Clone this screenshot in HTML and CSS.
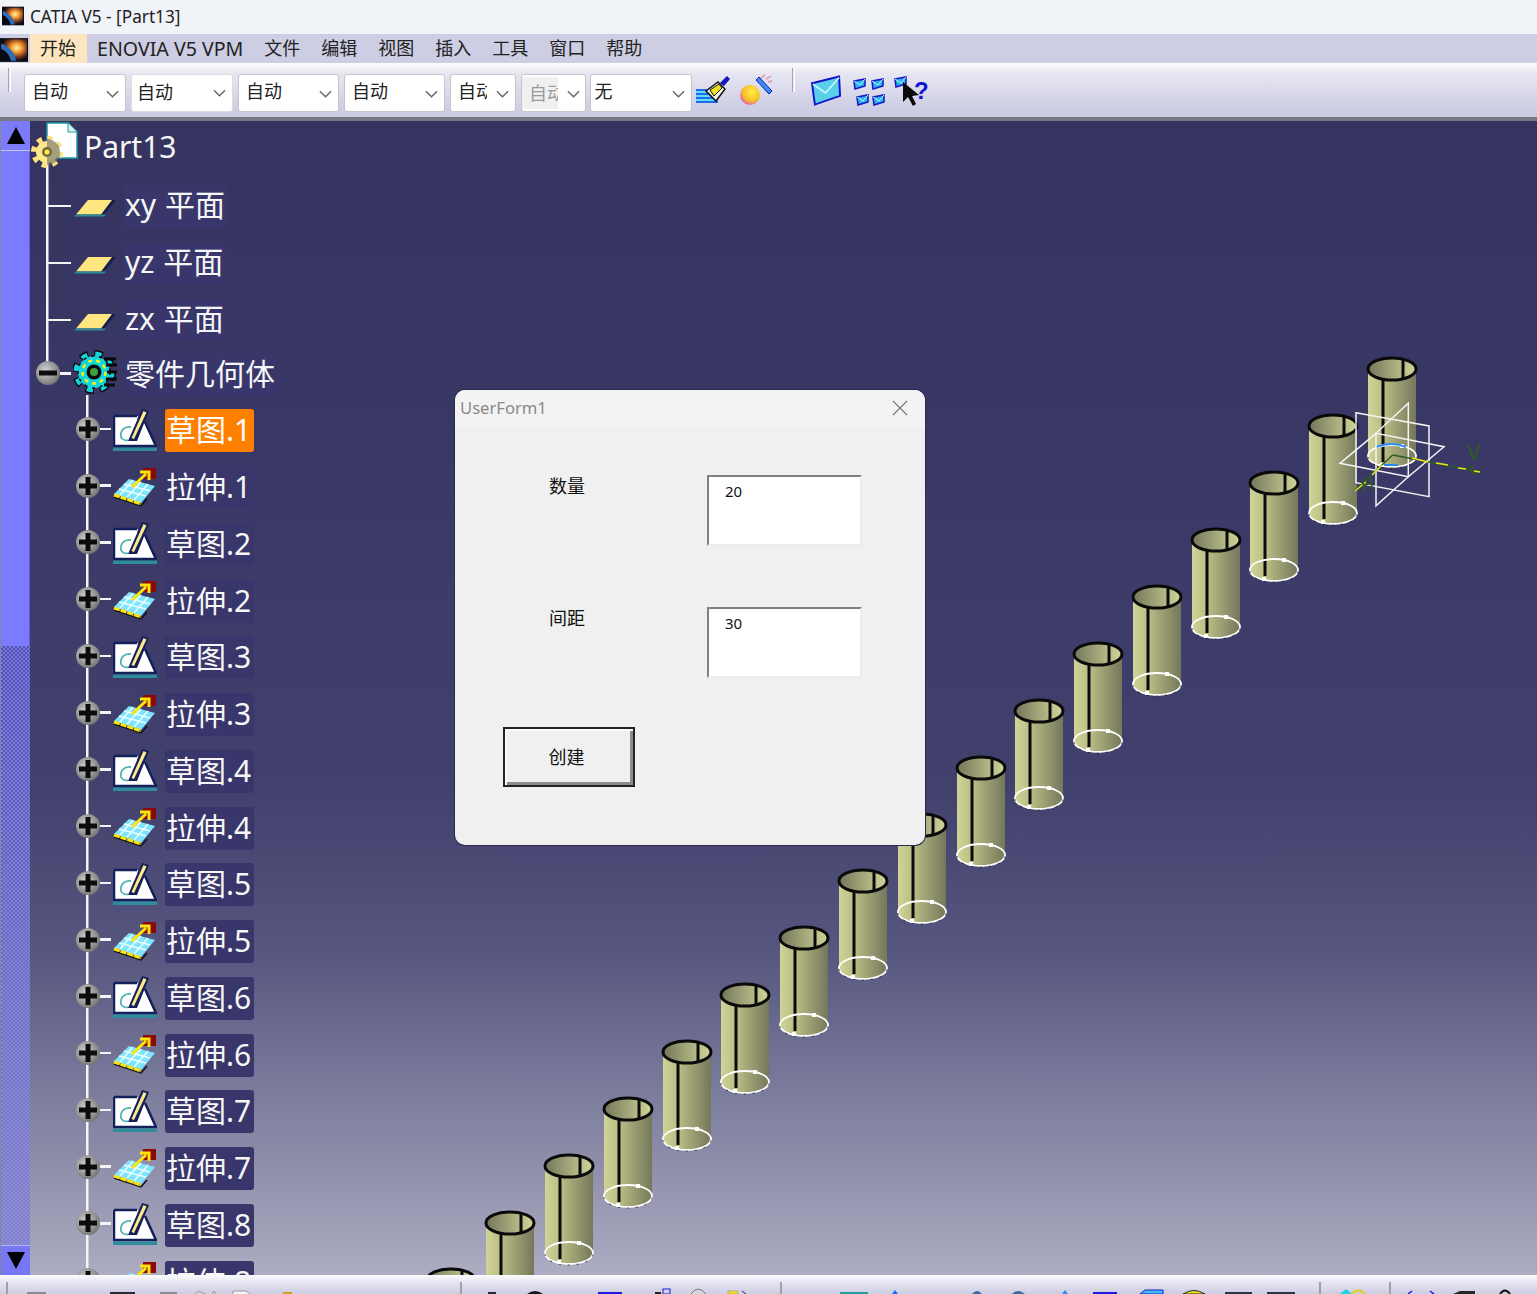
FILE: index.html
```html
<!DOCTYPE html>
<html lang="zh-CN">
<head>
    <meta charset="UTF-8">
    <title>CATIA V5 - [Part13]</title>
    <link rel="stylesheet" href="styles.css">
</head>
<body>

<!-- shared icons -->
<svg class="defs" width="0" height="0">
    <defs>
        <radialGradient id="burst" cx="0.6" cy="0.4" r="0.6">
            <stop offset="0" stop-color="#fff2b0"/>
            <stop offset="0.35" stop-color="#f59a2c"/>
            <stop offset="0.7" stop-color="#7a3a20"/>
            <stop offset="1" stop-color="#0a0a12"/>
        </radialGradient>
        <linearGradient id="cylSide">
            <stop offset="0" stop-color="#d0d496"/>
            <stop offset="0.35" stop-color="#b7bb84"/>
            <stop offset="1" stop-color="#74775a"/>
        </linearGradient>
        <linearGradient id="cylTop">
            <stop offset="0" stop-color="#74775a"/>
            <stop offset="1" stop-color="#d2d69a"/>
        </linearGradient>
        <radialGradient id="knob" cx="0.4" cy="0.4" r="0.7">
            <stop offset="0" stop-color="#d4d4d4"/>
            <stop offset="1" stop-color="#6a6a6a"/>
        </radialGradient>
        <radialGradient id="ball" cx="0.6" cy="0.35" r="0.75">
            <stop offset="0" stop-color="#ffee50"/>
            <stop offset="0.6" stop-color="#f8c020"/>
            <stop offset="0.85" stop-color="#e070a0"/>
            <stop offset="1" stop-color="#c030e0"/>
        </radialGradient>

        <symbol id="logo" viewBox="0 0 26 22">
            <rect width="26" height="22" fill="#0a0a12"/>
            <rect x="1" y="1" width="24" height="20" fill="url(#burst)"/>
            <path d="M1 5C9 8 14 14 15 21H10C9 16 6 12 1 10Z" fill="#2a6cc0"/>
            <path d="M1 10C6 12 9 16 10 21H1Z" fill="#0a0a12"/>
        </symbol>

        <symbol id="plane" viewBox="0 0 44 20">
            <path d="M2 18H30L43 2H16Z" fill="#14204a"/>
            <path d="M3 16.5L15 2H39L28 16.5Z" fill="#ffe680"/>
            <path d="M1 18.5H31L33 16.5H3Z" fill="#2e8c9c"/>
        </symbol>

        <symbol id="expand" viewBox="0 0 24 24">
            <circle cx="12" cy="12" r="12" fill="url(#knob)"/>
            <path d="M3 9.500H9.500V3H14.500V9.500H21V14.500H14.500V21H9.500V14.500H3Z" fill="#0c0c0c"/>
        </symbol>

        <symbol id="sketch" viewBox="0 0 44 44">
            <path d="M1 8H25L23 19L31 14L42 38H1Z" fill="#fff"/>
            <path d="M1 8H24M1 8V38H43L32 14" fill="none" stroke="#14205a" stroke-width="2.500"/>
            <path d="M0 39.500H44V43H0Z" fill="#2e8c9c"/>
            <path d="M18 19C11 18 7 23 8 29C9 32 13 33 15 32" fill="none" stroke="#4fb4b0" stroke-width="1.800"/>
            <path d="M29 1L36 3L24 33H15Z" fill="#14205a"/>
            <path d="M30.500 3L33.500 4.500L21 31L18.500 30Z" fill="#ffe98a"/>
        </symbol>

        <symbol id="pad" viewBox="0 0 44 40">
            <path d="M1 27L16 12L42 19L28 36Z" fill="#7fe4ff"/>
            <path d="M6 22L33 29M11 17L37 24M20 13L7 28M28 15L14 30M35 17L21 33" stroke="#eaffff" stroke-width="1.500"/>
            <path d="M1 28L28 37L34 30" fill="none" stroke="#111" stroke-width="1.500" transform="translate(0 2)"/>
            <path d="M1 28L28 37" fill="none" stroke="#ffe40a" stroke-width="3" stroke-dasharray="6 1"/>
            <rect x="30" y="1" width="13" height="11" fill="#8a0a0a"/>
            <path d="M19 20L33 7M27 5H36V13" fill="none" stroke="#ffe40a" stroke-width="3"/>
        </symbol>

        <symbol id="env" viewBox="0 0 14 12">
            <path d="M1 3L12 1V8L2 11Z" fill="#2ab4ea" stroke="#1414c8" stroke-width="1.500"/>
            <path d="M1 3L7 7L12 1" fill="none" stroke="#bfefff"/>
        </symbol>

        <g id="cyl">
            <path d="M-24 0V87A24 11 0 0 0 24 87V0Z" fill="url(#cylSide)"/>
            <ellipse cy="0" rx="24" ry="11" fill="url(#cylTop)" stroke="#0a0a0a" stroke-width="3"/>
            <path d="M11 -10V10" stroke="#0a0a0a" stroke-width="3"/>
            <path d="M-9 10V93" stroke="#0a0a0a" stroke-width="3"/>
            <ellipse cy="87" rx="24" ry="11" fill="none" stroke="#fff" stroke-width="1.800"/>
            <path d="M-24 88A24 11 0 0 0 24 88" fill="none" stroke="#111" stroke-width="1" stroke-dasharray="2 7" opacity="0.800"/>
            <rect x="8" y="75" width="4" height="4" fill="#fff"/>
            <rect x="-12" y="94" width="4" height="4" fill="#fff"/>
        </g>
    </defs>
</svg>

<div class="app">
    <div class="titlebar">
        <svg class="title-logo"><use href="#logo"/></svg>
        <span>CATIA V5 - [Part13]</span>
    </div>

    <div class="menubar">
        <svg class="menu-logo"><use href="#logo"/></svg>
        <span class="menu-item active">开始</span>
        <span class="menu-item menu-latin">ENOVIA V5 VPM</span>
        <span class="menu-item">文件</span>
        <span class="menu-item">编辑</span>
        <span class="menu-item">视图</span>
        <span class="menu-item">插入</span>
        <span class="menu-item">工具</span>
        <span class="menu-item">窗口</span>
        <span class="menu-item">帮助</span>
    </div>

    <div class="toolbar">
        <div class="grip"></div>
        <div class="combo w102"><span class="combo-text">自动</span><svg class="chev" viewBox="0 0 14 8"><path d="M1 1L7 7L13 1"/></svg></div>
        <div class="combo w102 combo-b"><span class="combo-text">自动</span><svg class="chev" viewBox="0 0 14 8"><path d="M1 1L7 7L13 1"/></svg></div>
        <div class="combo w101"><span class="combo-text">自动</span><svg class="chev" viewBox="0 0 14 8"><path d="M1 1L7 7L13 1"/></svg></div>
        <div class="combo w101"><span class="combo-text">自动</span><svg class="chev" viewBox="0 0 14 8"><path d="M1 1L7 7L13 1"/></svg></div>
        <div class="combo w66"><span class="combo-text">自动</span><svg class="chev" viewBox="0 0 14 8"><path d="M1 1L7 7L13 1"/></svg></div>
        <div class="combo w65 disabled"><span class="combo-text">自动</span><svg class="chev" viewBox="0 0 14 8"><path d="M1 1L7 7L13 1"/></svg></div>
        <div class="combo w102 combo-none"><span class="combo-text">无</span><svg class="chev" viewBox="0 0 14 8"><path d="M1 1L7 7L13 1"/></svg></div>

        <svg class="tool brush" viewBox="0 0 36 34">
            <path d="M2 16H18M2 20H20M2 24H22M2 28H24" stroke="#1a6cf0" stroke-width="2"/>
            <path d="M2 18H18M2 22H20M2 26H22" stroke="#3ce0f0" stroke-width="1.500"/>
            <path d="M12 17L24 8L31 15L22 27Z" fill="#f4f4e4" stroke="#111" stroke-width="1.500"/>
            <path d="M16 16L25 10L28 14L20 22Z" fill="#f0e020" stroke="#111"/>
            <path d="M26 9L33 2L36 5L30 12Z" fill="#1414b8"/>
        </svg>
        <svg class="tool ball" viewBox="0 0 34 34">
            <circle cx="10" cy="21" r="10" fill="url(#ball)"/>
            <path d="M16 6L29 20L32 17L19 3Z" fill="#3c8cf0" stroke="#1414b8"/>
            <path d="M21 4L25 1M26 5L31 2M28 8L32 7" stroke="#e0a0c0" stroke-width="2"/>
        </svg>
        <div class="grip grip-b"></div>
        <svg class="tool envelope" viewBox="0 0 32 34">
            <path d="M1 9L29 2L30 22L4 31Z" fill="#58d0ea" stroke="#1414c8" stroke-width="2"/>
            <path d="M2 10L15 19L29 3" fill="none" stroke="#d8f6ff" stroke-width="1.500"/>
        </svg>
        <svg class="tool many" viewBox="0 0 34 34">
            <use href="#env" x="1" y="4" width="14" height="12"/>
            <use href="#env" x="19" y="4" width="14" height="12"/>
            <use href="#env" x="4" y="20" width="14" height="12"/>
            <use href="#env" x="20" y="20" width="14" height="12"/>
        </svg>
        <svg class="tool cursor" viewBox="0 0 35 34">
            <use href="#env" x="0" y="2" width="14" height="12"/>
            <path d="M9 8V28L14 23L19 32L22 30L18 22L25 21Z" fill="#0a0a0a"/>
            <text class="help-mark" x="20" y="25">?</text>
        </svg>
    </div>

    <div class="viewport">
        <!-- 3d scene, coordinates are the screen ones -->
        <svg class="scene" viewBox="0 121 1537 1154">
            <use href="#cyl" x="1392" y="369"/>
            <use href="#cyl" x="1333" y="426"/>
            <use href="#cyl" x="1274" y="483"/>
            <use href="#cyl" x="1216" y="540"/>
            <use href="#cyl" x="1157" y="597"/>
            <use href="#cyl" x="1098" y="654"/>
            <use href="#cyl" x="1039" y="711"/>
            <use href="#cyl" x="981" y="768"/>
            <use href="#cyl" x="922" y="825"/>
            <use href="#cyl" x="863" y="881"/>
            <use href="#cyl" x="804" y="938"/>
            <use href="#cyl" x="745" y="995"/>
            <use href="#cyl" x="687" y="1052"/>
            <use href="#cyl" x="628" y="1109"/>
            <use href="#cyl" x="569" y="1166"/>
            <use href="#cyl" x="510" y="1223"/>
            <use href="#cyl" x="451" y="1280"/>

            <path d="M1376 447Q1392 441 1406 447M1384 465H1398" fill="none" stroke="#2a8cf0" stroke-width="2"/>
            <g fill="none" stroke="#f4f4f4" stroke-width="1.500">
                <path d="M1356 412.700L1429 426V496.700L1356 482.700Z"/>
                <path d="M1408.300 403.300V476.700L1376 505.700V433.300Z"/>
                <path d="M1340 463.300L1376 433.300L1444 446.700L1408.300 476.700Z"/>
            </g>
            <g fill="none" stroke="#2f5c1c" stroke-width="1.500">
                <path d="M1392.700 455L1480 471.700"/>
                <path d="M1392.700 455L1382 465L1355 490.700"/>
                <path d="M1466 470L1472 466V474L1480 472"/>
            </g>
            <g fill="none" stroke="#e6e620" stroke-width="1.500">
                <path d="M1412 458L1428 462M1436 463L1448 465M1458 468L1466 469M1474 471L1480 472"/>
                <path d="M1382 465L1372 475M1366 482L1355 491"/>
            </g>
            <text class="axis" x="1467" y="460">V</text>
            <text class="axis axis-h" x="1362" y="492" transform="rotate(-10 1362 492)">H</text>
        </svg>

        <div class="scrollbar">
            <div class="scroll-btn"><span class="tri-up"></span></div>
            <div class="scroll-thumb"></div>
            <div class="scroll-track"></div>
            <div class="scroll-btn scroll-btn-down"><span class="tri-down"></span></div>
        </div>

        <div class="tree">
            <div class="tree-root">
                <div class="row row-part">
                    <svg class="part-icon" viewBox="0 0 50 50">
                        <path d="M17 1H38L47 10V36H17Z" fill="#fff" stroke="#1c9aa8" stroke-width="1.500"/>
                        <path d="M38 1V10H47" fill="#d8f4f4" stroke="#1c9aa8"/>
                        <circle cx="17" cy="30" r="13" fill="none" stroke="#ffe27a" stroke-width="6" stroke-dasharray="5 5.200"/>
                        <circle cx="17" cy="30" r="11" fill="#ffe88a"/>
                        <path d="M17 17A13 13 0 0 1 17 43Z" fill="#77766e" opacity="0.650"/>
                        <circle cx="17" cy="30" r="5" fill="#6e6a40"/>
                        <circle cx="17" cy="30" r="2.500" fill="#fff04a"/>
                    </svg>
                    <span class="label label-part">Part13</span>
                </div>
                <div class="row row-plane">
                    <span class="branch branch-long"></span>
                    <svg class="plane-icon"><use href="#plane"/></svg>
                    <span class="label label-top">xy 平面</span>
                </div>
                <div class="row row-plane">
                    <span class="branch branch-long"></span>
                    <svg class="plane-icon"><use href="#plane"/></svg>
                    <span class="label label-top">yz 平面</span>
                </div>
                <div class="row row-plane">
                    <span class="branch branch-long"></span>
                    <svg class="plane-icon"><use href="#plane"/></svg>
                    <span class="label label-top">zx 平面</span>
                </div>
                <div class="row row-body">
                    <svg class="knob" viewBox="0 0 24 24">
                        <circle cx="12" cy="12" r="12" fill="url(#knob)"/>
                        <path d="M3 9.500H21V14.500H3Z" fill="#0c0c0c"/>
                    </svg>
                    <span class="branch"></span>
                    <svg class="body-icon" viewBox="0 0 44 44">
                        <circle cx="21" cy="22" r="18" fill="none" stroke="#0a0a0a" stroke-width="8" stroke-dasharray="8 6.100"/>
                        <circle cx="21" cy="22" r="18" fill="none" stroke="#14d4dc" stroke-width="5" stroke-dasharray="6 8.100" stroke-dashoffset="-1"/>
                        <circle cx="21" cy="22" r="16" fill="#14d4dc"/>
                        <circle cx="21" cy="22" r="16" fill="none" stroke="#0a0a0a" stroke-width="1.500" stroke-dasharray="3 5"/>
                        <circle cx="21" cy="22" r="11.500" fill="none" stroke="#f4f01a" stroke-width="2.500" stroke-dasharray="4 4"/>
                        <path d="M31 9H43M33 15H44M34 22H44M33 29H44M31 35H42" stroke="#0a0a0a" stroke-width="3"/>
                        <circle cx="21" cy="22" r="7.500" fill="#0a0a0a"/>
                        <circle cx="21" cy="22" r="4" fill="#3ea03a"/>
                    </svg>
                    <span class="label label-top">零件几何体</span>
                </div>
            </div>

            <div class="tree-children">
                <div class="row row-child">
                    <svg class="knob"><use href="#expand"/></svg><span class="branch"></span>
                    <svg class="feat-icon"><use href="#sketch"/></svg>
                    <span class="label label-sel">草图.1</span>
                </div>
                <div class="row row-child">
                    <svg class="knob"><use href="#expand"/></svg><span class="branch"></span>
                    <svg class="feat-icon"><use href="#pad"/></svg>
                    <span class="label">拉伸.1</span>
                </div>
                <div class="row row-child">
                    <svg class="knob"><use href="#expand"/></svg><span class="branch"></span>
                    <svg class="feat-icon"><use href="#sketch"/></svg>
                    <span class="label">草图.2</span>
                </div>
                <div class="row row-child">
                    <svg class="knob"><use href="#expand"/></svg><span class="branch"></span>
                    <svg class="feat-icon"><use href="#pad"/></svg>
                    <span class="label">拉伸.2</span>
                </div>
                <div class="row row-child">
                    <svg class="knob"><use href="#expand"/></svg><span class="branch"></span>
                    <svg class="feat-icon"><use href="#sketch"/></svg>
                    <span class="label">草图.3</span>
                </div>
                <div class="row row-child">
                    <svg class="knob"><use href="#expand"/></svg><span class="branch"></span>
                    <svg class="feat-icon"><use href="#pad"/></svg>
                    <span class="label">拉伸.3</span>
                </div>
                <div class="row row-child">
                    <svg class="knob"><use href="#expand"/></svg><span class="branch"></span>
                    <svg class="feat-icon"><use href="#sketch"/></svg>
                    <span class="label">草图.4</span>
                </div>
                <div class="row row-child">
                    <svg class="knob"><use href="#expand"/></svg><span class="branch"></span>
                    <svg class="feat-icon"><use href="#pad"/></svg>
                    <span class="label">拉伸.4</span>
                </div>
                <div class="row row-child">
                    <svg class="knob"><use href="#expand"/></svg><span class="branch"></span>
                    <svg class="feat-icon"><use href="#sketch"/></svg>
                    <span class="label">草图.5</span>
                </div>
                <div class="row row-child">
                    <svg class="knob"><use href="#expand"/></svg><span class="branch"></span>
                    <svg class="feat-icon"><use href="#pad"/></svg>
                    <span class="label">拉伸.5</span>
                </div>
                <div class="row row-child">
                    <svg class="knob"><use href="#expand"/></svg><span class="branch"></span>
                    <svg class="feat-icon"><use href="#sketch"/></svg>
                    <span class="label">草图.6</span>
                </div>
                <div class="row row-child">
                    <svg class="knob"><use href="#expand"/></svg><span class="branch"></span>
                    <svg class="feat-icon"><use href="#pad"/></svg>
                    <span class="label">拉伸.6</span>
                </div>
                <div class="row row-child">
                    <svg class="knob"><use href="#expand"/></svg><span class="branch"></span>
                    <svg class="feat-icon"><use href="#sketch"/></svg>
                    <span class="label">草图.7</span>
                </div>
                <div class="row row-child">
                    <svg class="knob"><use href="#expand"/></svg><span class="branch"></span>
                    <svg class="feat-icon"><use href="#pad"/></svg>
                    <span class="label">拉伸.7</span>
                </div>
                <div class="row row-child">
                    <svg class="knob"><use href="#expand"/></svg><span class="branch"></span>
                    <svg class="feat-icon"><use href="#sketch"/></svg>
                    <span class="label">草图.8</span>
                </div>
                <div class="row row-child">
                    <svg class="knob"><use href="#expand"/></svg><span class="branch"></span>
                    <svg class="feat-icon"><use href="#pad"/></svg>
                    <span class="label">拉伸.8</span>
                </div>
            </div>
        </div>

        <div class="dialog">
            <div class="dialog-title">
                <span>UserForm1</span>
                <svg class="dialog-close" viewBox="0 0 16 16"><path d="M1 1L15 15M15 1L1 15"/></svg>
            </div>
            <div class="dialog-body">
                <label class="form-label">数量</label>
                <div class="field">20</div>
                <label class="form-label">间距</label>
                <div class="field">30</div>
                <button class="create-btn" type="button">创建</button>
            </div>
        </div>
    </div>

    <div class="statusbar">
        <svg class="status-icons" viewBox="0 0 1537 19">
            <g fill="#e8e8f0" stroke="#a0a0a8">
                <path d="M7 7V19M461 7V19M781 7V19M1320 7V19M1390 7V19" stroke-width="2"/>
            </g>
            <rect x="27" y="17" width="19" height="2" fill="#8a8a90"/>
            <rect x="110" y="17" width="25" height="2" fill="#28283a"/>
            <rect x="160" y="17" width="17" height="2" fill="#8a8a90"/>
            <path d="M195 19L199 16L205 19M212 19L214 16L216 19" fill="none" stroke="#9a9aa0"/>
            <path d="M233 19V16H246L250 19" fill="#f4f4f8" stroke="#9a9aa0"/>
            <rect x="283" y="17" width="9" height="2" fill="#d8a020"/>
            <rect x="488" y="17" width="8" height="2" fill="#28283a"/>
            <path d="M527 19Q535 13 543 19Z" fill="#16161e"/>
            <rect x="598" y="17" width="24" height="2" fill="#1a1ae0"/>
            <rect x="655" y="17" width="6" height="2" fill="#222"/>
            <rect x="663" y="14" width="7" height="5" fill="none" stroke="#1a1ae0"/>
            <path d="M691 19Q698 9 706 19" fill="#d4d4dc" stroke="#777"/>
            <rect x="728" y="16" width="10" height="3" fill="#f0e020" stroke="#888" stroke-width="0.500"/>
            <path d="M742 16L746 19" stroke="#222"/>
            <rect x="840" y="17" width="28" height="2" fill="#2a9c9c"/>
            <path d="M892 19L895 15L898 19Z" fill="#1a6cf0"/>
            <path d="M972 19Q977 13 982 19Z" fill="#3a6c9c"/>
            <path d="M1012 19Q1018 13 1025 19Z" fill="#3a6c9c"/>
            <path d="M1062 19L1065 15L1068 19Z" fill="#2a8cf0"/>
            <rect x="1093" y="17" width="24" height="2" fill="#1a1ae0"/>
            <path d="M1140 19L1145 15H1163V19Z" fill="#40c0f0" stroke="#1a1ae0"/>
            <path d="M1183 19Q1194 12 1205 19Z" fill="#f0e020" stroke="#222"/>
            <rect x="1225" y="17" width="27" height="2" fill="#303048"/>
            <rect x="1267" y="17" width="28" height="2" fill="#303048"/>
            <path d="M1340 19L1346 14L1352 19Z" fill="#20d0e0"/>
            <path d="M1352 19Q1358 12 1365 19" fill="none" stroke="#e0d020" stroke-width="2"/>
            <path d="M1408 19L1412 16M1430 16L1434 19" stroke="#1a1ae0" stroke-width="1.500"/>
            <path d="M1453 19L1460 16H1475V19Z" fill="#26262c"/>
            <path d="M1500 19Q1505 12 1510 19" fill="none" stroke="#111" stroke-width="2"/>
        </svg>
    </div>
</div>

</body>
</html>
```

FILE: styles.css
```css
* {
    box-sizing: border-box;
}
body {
    margin: 0;
    font-family: "Noto Sans", "Noto Sans CJK SC", sans-serif;
    color: #222;
    overflow: hidden;
}
.defs {
    display: block;
    height: 0;
}
.app {
    display: flex;
    flex-direction: column;
    height: 1294px;
    overflow: hidden;
}

/* title + menu */
.titlebar {
    display: flex;
    align-items: center;
    height: 34px;
    padding: 0 0 2px 2px;
    background: #f0f4f9;
    font-size: 17.2px;
}
.title-logo {
    width: 22px;
    height: 20px;
    margin-right: 6px;
}
.menubar {
    display: flex;
    align-items: center;
    height: 29px;
    background: #cdcde3;
    font-size: 18px;
}
.menu-logo {
    width: 28px;
    height: 24px;
    margin-right: 2px;
    margin-top: 2px;
}
.menu-item {
    padding: 0 10.5px;
    height: 29px;
    line-height: 29px;
    white-space: nowrap;
}
.menu-item.active {
    background: #fde5bf;
    padding: 0 11px 0 10px;
}
.menu-latin {
    padding-left: 10px;
    font-size: 19.6px;
}

/* toolbar */
.toolbar {
    display: flex;
    align-items: flex-start;
    height: 58px;
    padding: 11px 0 0 8px;
    background: linear-gradient(#fcfcfe 0, #e6e6f2 20%, #cbcbe2 90%);
    border-bottom: 4px solid #77777f;
}
.grip {
    width: 3px;
    height: 24px;
    margin-top: -6px;
    margin-right: 13px;
    background: #e8e8f2;
    border-left: 1px solid #a6a6b4;
    border-right: 1px solid #fff;
}
.grip-b {
    margin-left: 18px;
    margin-right: 16px;
}
.combo {
    display: flex;
    align-items: center;
    height: 38px;
    margin-right: 5px;
    padding: 0 6px 6px 7px;
    background: #fff;
    border: 1.5px solid #c6c6c8;
    border-radius: 3px;
    font-size: 18px;
}
.combo-b {
    padding-left: 5px;
    padding-bottom: 4px;
    border-color: #dcdce2;
}
.combo-b .chev {
    margin-top: 3px;
}
.combo-none {
    padding-left: 3.5px;
}
.w102 {
    width: 102px;
}
.w101 {
    width: 101px;
}
.w66 {
    width: 66px;
}
.w65 {
    width: 65px;
    margin-right: 4px;
}
.combo-text {
    flex: 1;
    min-width: 0;
    overflow: hidden;
    white-space: nowrap;
    margin-right: 9px;
}
.combo.disabled {
    color: #9a9a9a;
    padding-left: 0;
}
.combo.disabled .combo-text {
    background: #f0f0f0;
    padding-left: 7px;
    height: 32px;
    line-height: 32px;
    margin-top: 6px;
    flex: none;
    width: 36px;
    margin-right: 9px;
}
.chev {
    flex: none;
    width: 13px;
    height: 8px;
    margin-top: 7px;
    fill: none;
    stroke: #666;
    stroke-width: 1.5;
}
.tool {
    flex: none;
    height: 34px;
}
.brush {
    width: 36px;
    margin-left: -3px;
}
.ball {
    width: 34px;
    margin-left: 10px;
}
.envelope {
    width: 31px;
}
.many {
    width: 34px;
    margin-left: 10px;
}
.cursor {
    width: 35px;
    margin-left: 8px;
}
.help-mark {
    font-family: "Liberation Sans", sans-serif;
    font-size: 24px;
    font-weight: bold;
    fill: #1414d8;
}

/* 3d viewport */
.viewport {
    position: relative;
    flex: 1;
    min-height: 0;
    display: flex;
    overflow: hidden;
    background: linear-gradient(#35335f 0, #3a3866 30%, #42416e 58%, #56567f 72%, #acacc2 100%);
}
.scene {
    position: absolute;
    left: 0;
    top: 0;
    width: 1537px;
    height: 1154px;
}
.axis {
    font-family: "Noto Sans", sans-serif;
    font-size: 22px;
    fill: #2f5c1c;
}
.axis-h {
    font-size: 18px;
}

/* scrollbar on the tree side */
.scrollbar {
    position: relative;
    display: flex;
    flex-direction: column;
    flex: none;
    width: 30px;
    border-left: 1px solid #85859c;
}
.scroll-btn {
    flex: none;
    display: flex;
    justify-content: center;
    align-items: center;
    height: 30px;
    background: #7b7bfb;
    border-bottom: 1px solid #c4c4ff;
}
.scroll-btn-down {
    border-bottom: 0;
    border-top: 1px solid #b0b0ff;
    background: #7878f6;
}
.tri-up,
.tri-down {
    width: 0;
    height: 0;
    border-left: 9px solid transparent;
    border-right: 9px solid transparent;
}
.tri-up {
    border-bottom: 17px solid #000;
}
.tri-down {
    border-top: 17px solid #000;
}
.scroll-thumb {
    flex: none;
    height: 495px;
    background: #7b7bff;
    border-right: 1px solid #5c5cd4;
}
.scroll-track {
    flex: 1;
    background:
        linear-gradient(rgba(130, 130, 200, 0), rgba(160, 160, 215, 0.6)),
        repeating-conic-gradient(#5252b6 0 25%, #7676dc 0 50%) 0 0 / 4px 4px;
}

/* feature tree */
.tree {
    position: relative;
    flex: 1;
    min-width: 0;
}
.tree-root {
    background: linear-gradient(#f4f4f4, #f4f4f4) no-repeat 16px 40px / 2.5px 204px;
}
.tree-children {
    margin-top: -8px;
    padding-top: 8px;
    background: linear-gradient(#f4f4f4, #f4f4f4) no-repeat 56px 0 / 2.5px 100%;
}
.row {
    display: flex;
    align-items: center;
    color: #f6f6f6;
    font-size: 30px;
}
.row-part {
    height: 56.5px;
}
.row-plane {
    height: 57px;
    padding-left: 17px;
}
.row-body {
    height: 54px;
    padding-left: 6px;
}
.row-child {
    height: 56.75px;
    padding-left: 46px;
}
.part-icon {
    width: 50px;
    height: 50px;
    margin-right: 3px;
    margin-bottom: 4px;
}
.branch {
    flex: none;
    width: 11px;
    height: 2.5px;
    background: #f4f4f4;
    margin-bottom: 4px;
}
.row-plane .branch {
    margin-bottom: 0;
}
.branch-long {
    width: 24px;
}
.knob {
    flex: none;
    width: 24px;
    height: 24px;
    margin-bottom: 4px;
}
.row-body .knob {
    margin-bottom: 6px;
}
.plane-icon {
    flex: none;
    width: 44px;
    height: 20px;
    margin-left: 2px;
    margin-right: 7px;
    margin-top: 3px;
}
.body-icon {
    flex: none;
    width: 44px;
    height: 44px;
    margin-left: 2px;
    margin-right: 7px;
    margin-top: -7px;
}
.feat-icon {
    flex: none;
    width: 44px;
    height: 44px;
    margin-left: 2px;
    margin-right: 8px;
    margin-bottom: 2px;
}
.label {
    display: block;
    height: 43px;
    line-height: 41px;
    padding: 0 3px 0 1px;
    background: #38366a;
    border-radius: 3px;
    white-space: nowrap;
}
.label-top {
    padding: 0 2px 0 1px;
    line-height: 39px;
    word-spacing: 1px;
}
.label-part {
    margin-bottom: 6px;
    line-height: 43px;
    background: none;
}
.label-sel {
    background: #ff8000;
    color: #fff;
}

/* VBA user form */
.dialog {
    position: absolute;
    left: 455px;
    top: 269px;
    width: 470px;
    height: 455px;
    background: #f0f0f0;
    border-radius: 10px;
    box-shadow: 0 0 0 1px #2c2a50;
    overflow: hidden;
}
.dialog-title {
    display: flex;
    align-items: center;
    justify-content: space-between;
    height: 38px;
    padding: 0 17px 3px 5px;
    background: #f3f3f3;
    color: #8a8a8a;
    font-size: 16.6px;
}
.dialog-close {
    width: 16px;
    height: 16px;
    fill: none;
    stroke: #7a7a7a;
    stroke-width: 1.2;
}
.dialog-body {
    display: grid;
    grid-template-columns: 204px 155px;
    grid-template-rows: 71px 71px 60px;
    row-gap: 61px;
    padding: 47px 0 0 48px;
    font-size: 18px;
    color: #111;
}
.form-label {
    width: 128px;
    line-height: 22px;
    text-align: center;
}
.field {
    padding: 4px 0 0 16px;
    background: #fff;
    border: 2px solid #ececec;
    border-top-color: #808080;
    border-left-color: #808080;
    font-size: 15px;
    line-height: 20px;
}
.create-btn {
    width: 132px;
    height: 60px;
    margin-top: -12px;
    padding: 0 5px 2px 0;
    background: #f0f0f0;
    border: 2px solid #222;
    box-shadow: inset 2px 2px 0 #fafafa, inset -3px -3px 0 #8c8c8c;
    font-family: inherit;
    font-size: 18px;
    color: #111;
}

/* bottom toolbar, only its top edge is on screen */
.statusbar {
    flex: none;
    height: 19px;
    background: linear-gradient(#fcfcfe 0, #e4e4f0 40%, #cdcde3 100%);
}
.status-icons {
    display: block;
    width: 1537px;
    height: 19px;
}
```
